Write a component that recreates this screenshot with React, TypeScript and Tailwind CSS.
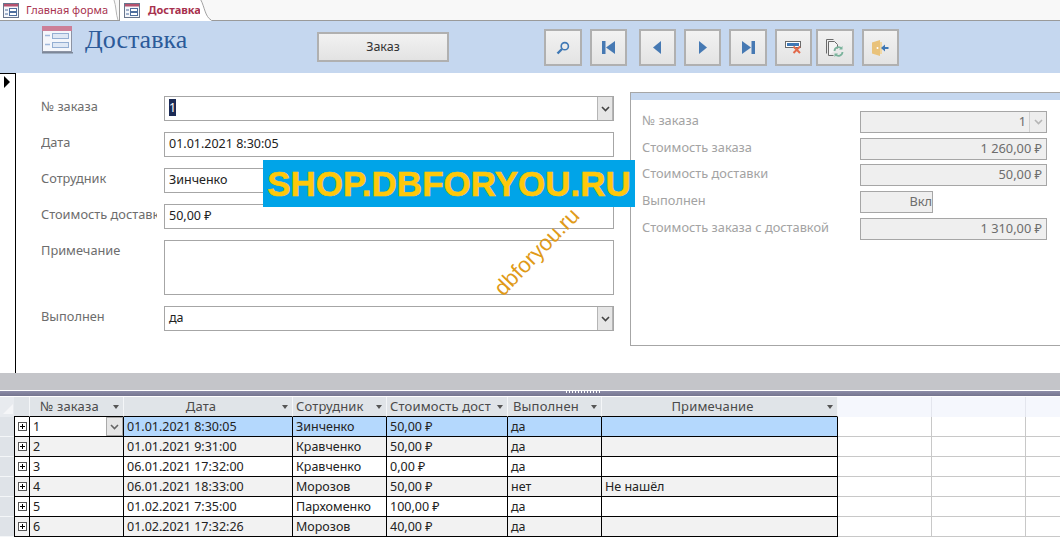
const font = "font-['Noto_Sans','Open_Sans',sans-serif]";

function FormIcon({ large }: { large?: boolean }) {
  return large ? (
    <svg width="32" height="29" viewBox="0 0 32 29" className="block shrink-0">
      <rect x="1.5" y="1.5" width="29" height="25" fill="#f4f6fb" stroke="#8c93a3" />
      <rect x="1" y="1" width="30" height="5" fill="#cc7f98" />
      <rect x="1" y="27" width="31" height="1.5" fill="#7d8798" />
      <path d="M4 10.5h5M4 19.5h5" stroke="#9fb8dc" strokeWidth="1.5" />
      <rect x="11.5" y="8.5" width="16" height="5" fill="#dfe8f5" stroke="#94aed2" />
      <rect x="11.5" y="17.5" width="16" height="5" fill="#dfe8f5" stroke="#94aed2" />
    </svg>
  ) : (
    <svg width="16" height="15" viewBox="0 0 16 15" className="block shrink-0">
      <rect x=".5" y=".5" width="15" height="14" fill="#f5f7fb" stroke="#68758c" />
      <rect x="1" y="1" width="14" height="2.5" fill="#b5526f" />
      <path d="M2 7h3M2 11h3" stroke="#4f6f9e" />
      <rect x="6.5" y="5.5" width="7" height="3" fill="#fff" stroke="#4f6f9e" />
      <rect x="6.5" y="9.5" width="7" height="3" fill="#fff" stroke="#4f6f9e" />
    </svg>
  );
}

function IconBtn({ w, ml, children }: { w: string; ml: string; children: React.ReactNode }) {
  return (
    <div className={`${w} ${ml} h-[37px] shrink-0 border-2 border-[#b0b0b0] bg-gradient-to-b from-[#f2f2f2] to-[#e3e3e3] flex items-center justify-center`}>
      {children}
    </div>
  );
}

const Search = () => (
  <svg width="14" height="14" viewBox="0 0 14 14"><circle cx="8.8" cy="5.2" r="3.6" fill="none" stroke="#3f78b5" strokeWidth="1.6" /><path d="M6 8 1.5 12.5" stroke="#3f78b5" strokeWidth="2.4" /></svg>
);
const First = () => (
  <svg width="13" height="13" viewBox="0 0 13 13" fill="#4679b3"><rect x="0" y="0" width="3.5" height="13" /><path d="M13 0v13L4 6.5z" /></svg>
);
const Prev = () => (
  <svg width="9" height="13" viewBox="0 0 9 13" fill="#4679b3"><path d="M8 0v13L0 6.5z" /></svg>
);
const Next = () => (
  <svg width="9" height="13" viewBox="0 0 9 13" fill="#4679b3"><path d="M1 0v13l8-6.5z" /></svg>
);
const Last = () => (
  <svg width="13" height="13" viewBox="0 0 13 13" fill="#4679b3"><rect x="9.5" y="0" width="3.5" height="13" /><path d="M0 0v13l9-6.5z" /></svg>
);
const Del = () => (
  <svg width="17" height="13" viewBox="0 0 17 13"><rect x=".5" y=".5" width="15" height="6" fill="#fff" stroke="#6b6b6b" /><rect x="2" y="2" width="12" height="3" fill="#3f78b5" /><path d="m8.5 5.5 6.5 6.5m0-6.5-6.5 6.5" stroke="#e2694a" strokeWidth="2" /></svg>
);
const Copy = () => (
  <svg width="18" height="18" viewBox="0 0 18 18" fill="none"><path d="M.5 14.5V.5h7" stroke="#6a6a6a" /><path d="M2.5 16.5V2.5h6l3 3v4" stroke="#6a6a6a" fill="#f4f4f4" /><path d="M2.5 16.5h5" stroke="#6a6a6a" /><path d="M8.5 12a4 4 0 0 1 7-2.4M16.5 13a4 4 0 0 1-7 2.4" stroke="#7ab39c" strokeWidth="1.8" /><path d="M16.5 7v3.5H13M8.5 18v-3.5H12" fill="#7ab39c" /></svg>
);
const Exit = () => (
  <svg width="17" height="16" viewBox="0 0 17 16"><path d="M0 2.5 8 0v16l-8-2.5z" fill="#e9c27a" /><rect x="8" y="2" width="2" height="12" fill="#f0d7a4" /><circle cx="5.5" cy="8" r="1" fill="#fff" /><path d="M16.5 8H12" stroke="#3f78b5" strokeWidth="2" /><path d="M13 4.5v7L9 8z" fill="#3f78b5" /></svg>
);

function Chevron({ color = "#444" }: { color?: string }) {
  return (
    <svg width="9" height="6" viewBox="0 0 9 6" fill="none"><path d="m1 1 3.5 3.5L8 1" stroke={color} strokeWidth="1.6" /></svg>
  );
}

function FormRow({ label, h, mt, combo, value }: { label: string; h: string; mt: string; combo?: boolean; value?: React.ReactNode }) {
  return (
    <div className={`flex ${mt}`}>
      <div className="w-[116px] mr-[7px] pt-[1px] text-[12.8px] leading-[18px] text-[#6d6d6d] whitespace-nowrap overflow-hidden">{label}</div>
      <div className={`w-[450px] ${h} border-[1.5px] border-[#a6a6a6] bg-white flex items-center justify-between pl-[4px] text-[12.5px] text-[#222]`}>
        <span className="leading-[18px] pb-[2px]">{value}</span>
        {combo && (
          <span className="w-[16px] h-full bg-[#e6e6e6] border-x border-[#b5b5b5] flex items-center justify-center shrink-0">
            <Chevron />
          </span>
        )}
      </div>
    </div>
  );
}

function SideRow({ label, value, h = "mt-[5px]", narrow, combo }: { label: string; value: string; h?: string; narrow?: boolean; combo?: boolean }) {
  return (
    <div className={`flex items-center ${h}`}>
      <div className="w-[218px] pb-[4px] text-[12.8px] leading-[18px] text-[#a3a3a3] whitespace-nowrap">{label}</div>
      <div className={`${narrow ? "w-[73px]" : "w-[187px]"} h-[22px] border-[1.5px] border-[#a6a6a6] bg-[#efefef] flex items-center justify-end text-[12.8px] text-[#6d6d6d] ${combo || narrow ? "" : "pr-[4px]"}`}>
        <span className="pb-[1px]">{value}</span>
        {combo && (
          <span className="ml-[3px] w-[17px] h-full bg-[#ededed] border-l border-[#d0d0d0] flex items-center justify-center shrink-0">
            <Chevron color="#b5b5b5" />
          </span>
        )}
      </div>
    </div>
  );
}

const cols = "grid grid-cols-[14px_16px_94px_169px_94px_121px_94px_236px_94px_94px_34px]";

const rows = [
  ["1", "01.01.2021 8:30:05", "Зинченко", "50,00 ₽", "да", ""],
  ["2", "01.01.2021 9:31:00", "Кравченко", "50,00 ₽", "да", ""],
  ["3", "06.01.2021 17:32:00", "Кравченко", "0,00 ₽", "да", ""],
  ["4", "06.01.2021 18:33:00", "Морозов", "50,00 ₽", "нет", "Не нашёл"],
  ["5", "01.02.2021 7:35:00", "Пархоменко", "100,00 ₽", "да", ""],
  ["6", "01.02.2021 17:32:26", "Морозов", "40,00 ₽", "да", ""],
];

function Head({ label, center, ml = "ml-[3px]" }: { label: string; center?: boolean; ml?: string }) {
  return (
    <div className="relative h-[20px] bg-[#e0e4e8] border-r border-[#f4f6f8] border-b border-b-black flex items-center overflow-hidden text-[13px] tracking-[0.15px] text-[#4a4a4a]">
      <span className={`${center ? "flex-1 text-center mr-[14px]" : `${ml} mr-[16px]`} pb-[2px] whitespace-nowrap overflow-hidden leading-[18px]`}>{label}</span>
      <span className="absolute right-[4px] top-[8px] w-0 h-0 border-x-[3.5px] border-x-transparent border-t-[4px] border-t-[#555]" />
    </div>
  );
}

export default function App() {
  return (
    <div className={`relative w-[1060px] h-[537px] overflow-hidden bg-white flex flex-col ${font}`}>
      {/* tabs */}
      <div className="h-[21px] shrink-0 flex border-b border-[#9a9a9a] bg-[#f8f8f8] text-[11px]">
        <div className="w-[113px] h-[20px] bg-white flex items-center pl-[3px] gap-[7px] text-[#a8324f] whitespace-nowrap">
          <FormIcon />
          <span>Главная форма</span>
        </div>
        <svg width="6" height="20" viewBox="0 0 6 20" className="block shrink-0"><path d="M0 0h1c2 5 3 15 5 20H0z" fill="#fff" /><path d="M1 0c2 5 2 15 4 20" stroke="#b5b5b5" fill="none" /></svg>
        <div className="w-[81px] h-[21px] bg-white border-l border-[#9a9a9a] flex items-center pl-[4px] gap-[8px] font-bold text-[#a8324f] whitespace-nowrap">
          <FormIcon />
          <span>Доставка</span>
        </div>
        <svg width="12" height="21" viewBox="0 0 14 21" preserveAspectRatio="none" className="block shrink-0"><path d="M0 0h1c4 6 5 17 13 21H0z" fill="#fff" /><path d="M1 0c4 6 5 17 12 20" stroke="#9a9a9a" fill="none" /></svg>
      </div>

      {/* header */}
      <div className="h-[52px] shrink-0 bg-[#c5d7ef] flex">
        <div className="ml-[41px] mt-[4px]"><FormIcon large /></div>
        <div className="ml-[12px] mt-[2px] font-['Liberation_Serif',serif] text-[26px] leading-[34px] text-[#2c5a99] w-[232px]">Доставка</div>
        <div className="mt-[11px] w-[132px] h-[30px] border-2 border-[#b0b0b0] bg-gradient-to-b from-[#f2f2f2] to-[#e3e3e3] flex items-center justify-center text-[12.5px] text-[#333]">Заказ</div>
        <div className="flex mt-[8px]">
          <IconBtn w="w-[38px]" ml="ml-[95px]"><Search /></IconBtn>
          <IconBtn w="w-[37px]" ml="ml-[8px]"><First /></IconBtn>
          <IconBtn w="w-[37px]" ml="ml-[12px]"><Prev /></IconBtn>
          <IconBtn w="w-[37px]" ml="ml-[8px]"><Next /></IconBtn>
          <IconBtn w="w-[38px]" ml="ml-[8px]"><Last /></IconBtn>
          <IconBtn w="w-[37px]" ml="ml-[8px]"><Del /></IconBtn>
          <IconBtn w="w-[38px]" ml="ml-[4px]"><Copy /></IconBtn>
          <IconBtn w="w-[37px]" ml="ml-[8px]"><Exit /></IconBtn>
        </div>
      </div>

      {/* form body */}
      <div className="h-[300px] shrink-0 flex">
        <div className="w-[16px] shrink-0 border-r border-t border-black relative">
          <span className="absolute left-[4px] top-[2px] w-0 h-0 border-y-[6px] border-y-transparent border-l-[6px] border-l-black" />
        </div>
        <div className="pl-[25px] pt-[23px] w-[614px] shrink-0">
          <FormRow label="№ заказа" h="h-[25px]" mt="" combo value={<span className="bg-[#1b2a55] text-white">1</span>} />
          <FormRow label="Дата" h="h-[25px]" mt="mt-[11px]" value="01.01.2021 8:30:05" />
          <FormRow label="Сотрудник" h="h-[25px]" mt="mt-[11px]" value="Зинченко" />
          <FormRow label="Стоимость доставки" h="h-[25px]" mt="mt-[11px]" value="50,00 ₽" />
          <FormRow label="Примечание" h="h-[55px]" mt="mt-[11px]" value="" />
          <FormRow label="Выполнен" h="h-[25px]" mt="mt-[11px]" combo value="да" />
        </div>
        <div className="mt-[19px] h-[254px] flex-1 border-l-[1.5px] border-y-[1.5px] border-[#a6a6a6] flex flex-col">
          <div className="h-[7px] shrink-0 bg-[#c5d7ef]" />
          <div className="pl-[11px] pt-[11px]">
            <SideRow label="№ заказа" value="1" h="" combo />
            <SideRow label="Стоимость заказа" value="1 260,00 ₽" />
            <SideRow label="Стоимость доставки" value="50,00 ₽" h="mt-[4px]" />
            <SideRow label="Выполнен" value="Вкл" narrow />
            <SideRow label="Стоимость заказа с доставкой" value="1 310,00 ₽" />
          </div>
        </div>
      </div>

      {/* splitter */}
      <div className="h-[17px] shrink-0 bg-[#c4c5c9]" />
      <div className="h-[1px] shrink-0 bg-white" />
      <div className="relative h-[5px] shrink-0 bg-gradient-to-b from-[#8c8ca8] to-[#75758f]">
        <span className="absolute left-[566px] top-0 w-[35px] h-[2px] bg-[repeating-linear-gradient(90deg,#fff_0_1px,transparent_1px_3px)]" />
      </div>
      <div className="h-[1px] shrink-0 bg-white" />

      {/* datasheet */}
      <div className="flex-1 text-[12.5px] overflow-hidden">
        <div className={cols}>
          <div className="h-[20px] bg-[#e8ebef] relative overflow-hidden">
            <span className="absolute right-[1px] bottom-[3px] w-0 h-0 border-l-[10px] border-l-transparent border-b-[10px] border-b-[#f5f6f8]" />
          </div>
          <div className="h-[20px] bg-[#e0e4e8] border-b border-b-black border-r border-r-[#f4f6f8]" />
          <Head label="№ заказа" ml="ml-[10px]" />
          <Head label="Дата" center />
          <Head label="Сотрудник" />
          <Head label="Стоимость доставки" />
          <Head label="Выполнен" ml="ml-[5px]" />
          <Head label="Примечание" center />
          <div className="h-[20px] bg-[#f5f7fd] border-r border-[#e4e6ee]" />
          <div className="h-[20px] bg-[#f5f7fd] border-r border-[#e4e6ee]" />
          <div className="h-[20px] bg-[#f5f7fd]" />
        </div>
        {rows.map((r, i) => {
          const bg = i === 0 ? "bg-[#b4d8fd]" : i % 2 ? "bg-[#f2f2f2]" : "bg-white";
          return (
            <div key={r[0]} className={`${cols} h-[20px]`}>
              <div className="bg-[#dfe3e8] border-b border-[#f4f6f8]" />
              <div className={`border-l border-r border-b border-black ${i % 2 ? "bg-[#f2f2f2]" : "bg-white"} flex items-center justify-center`}>
                <span className="w-[9px] h-[9px] border border-[#555] bg-white relative">
                  <span className="absolute left-[1px] top-[3px] w-[5px] h-[1px] bg-black" />
                  <span className="absolute left-[3px] top-[1px] w-[1px] h-[5px] bg-black" />
                </span>
              </div>
              <div className={`relative ${i % 2 ? "bg-[#f2f2f2]" : "bg-white"} border-r border-b border-black pl-[3px] leading-[20px] text-[#222] overflow-hidden`}>
                {r[0]}
                {i === 0 && (
                  <span className="absolute right-0 top-0 w-[17px] h-[19px] bg-[#e6e6e6] border border-[#aaa] flex items-center justify-center"><Chevron color="#666" /></span>
                )}
              </div>
              {r.slice(1).map((c, j) => (
                <div key={j} className={`${bg} border-r border-b border-black pl-[3px] leading-[20px] text-[#222] whitespace-nowrap overflow-hidden`}>{c}</div>
              ))}
              <div className="border-r border-b border-[#c8c8c8]" />
              <div className="border-r border-b border-[#c8c8c8]" />
              <div className="border-b border-[#c8c8c8]" />
            </div>
          );
        })}
      </div>

      {/* overlays */}
      <div className="absolute left-[263px] top-[160px] w-[372px] h-[47px] bg-[#00a4e8] flex items-center justify-center font-['Liberation_Sans',sans-serif] font-bold text-[35px] [-webkit-text-stroke:0.6px_#ffc80a] leading-none text-[#ffc80a] whitespace-nowrap">SHOP.DBFORYOU.RU</div>
      <div className="absolute left-[457px] top-[237px] w-[160px] text-center -rotate-[46deg] font-['Liberation_Sans',sans-serif] text-[22px] leading-[30px] text-[#e09a18] whitespace-nowrap">dbforyou.ru</div>
    </div>
  );
}
